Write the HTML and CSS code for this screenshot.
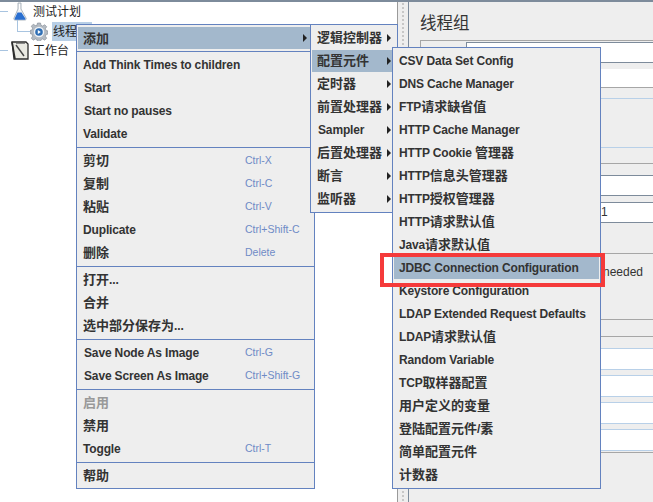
FILE: index.html
```html
<!DOCTYPE html>
<html lang="zh">
<head>
<meta charset="utf-8">
<title>JMeter</title>
<link rel="stylesheet" href="styles.css">
</head>
<body>
<div class="topbar"></div>
<div class="app">
  <div class="tree">
    <div class="stub stub-a"></div>
    <div class="stub stub-b"></div>
    <div class="elbow"></div>
    <div class="node node-plan">
      <svg class="ic-flask" viewBox="0 0 14 19"><path d="M5 1h3v6l5 9c.5 1.200 0 2-1.200 2H2.200C1 18 .5 17.200 1 16l4-9z" fill="#eef1f4" stroke="#9aa4ae" stroke-width=".8"/><path d="M4.500 10.500h4l3.800 6c.3.800 0 1.300-.9 1.300H2.600c-.9 0-1.200-.5-.9-1.300z" fill="#2a6fd0"/><path d="M6.500 2v6" stroke="#fff" stroke-width="1"/></svg>
      <span class="tree-label">测试计划</span>
    </div>
    <div class="node node-group">
      <svg class="ic-gear" viewBox="0 0 18 19"><path d="M7.500 1h3l.5 2.300 1.700.7 2-1.300 2 2-1.300 2 .7 1.800 2 .5v3l-2 .5-.7 1.700 1.300 2-2 2-2-1.300-1.700.7-.5 2h-3l-.5-2-1.700-.7-2 1.300-2-2 1.300-2L1.900 12 0 11.500v-3l1.900-.5.700-1.800-1.300-2 2-2 2 1.300L7 3.300z" fill="#b4bbc3" stroke="#7f8892" stroke-width=".6"/><circle cx="9" cy="10" r="5.200" fill="#eef1f4"/><circle cx="9" cy="10" r="3.800" fill="#2f6fb5"/><path d="M7.800 8l3 2-3 2z" fill="#fff"/></svg>
      <span class="tree-label selected">线程</span>
    </div>
    <div class="node node-bench">
      <svg class="ic-bench" viewBox="0 0 18 19"><path d="M1 1h14l2 2v15H3z" fill="#e9e9e2" stroke="#2c2c2c" stroke-width="1.300"/><path d="M1 1l3 17" stroke="#2c2c2c" stroke-width="1.600"/><path d="M5 4l8 11" stroke="#444" stroke-width="1.400"/><path d="M5 2.500h9" stroke="#888" stroke-width="1"/></svg>
      <span class="tree-label">工作台</span>
    </div>
  </div>
  <div class="splitter"><div class="grip"></div></div>
  <div class="panel">
    <div class="panel-title">线程组</div>
    <div class="box-line"><div class="field f-name"></div></div>
    <div class="field f-comment"></div>
    <div class="rule-blue r-a"></div>
    <div class="rule-blue r-b"></div>
    <div class="rule-grey r-c"></div>
    <div class="field f-dark f-threads"></div>
    <div class="field f-dark f-ramp">1</div>
    <div class="rule-grey r-d"></div>
    <div class="needed">needed</div>
    <div class="rule-grey r-e"></div>
    <div class="rule-grey r-g"></div>
    <div class="field f-blue f-first"></div>
    <div class="field f-blue"></div>
    <div class="field f-blue"></div>
    <div class="field f-blue"></div>
    <div class="rule-grey r-f"></div>
  </div>
</div>

<div class="menu menu-main">
  <div class="item active"><span class="c">添加</span><i class="arrow"></i></div>
  <div class="sep sep-tight"></div>
  <div class="item">Add Think Times to children</div>
  <div class="item nudge">Start</div>
  <div class="item nudge">Start no pauses</div>
  <div class="item">Validate</div>
  <div class="sep"></div>
  <div class="item"><span class="c">剪切</span><kbd>Ctrl-X</kbd></div>
  <div class="item"><span class="c">复制</span><kbd>Ctrl-C</kbd></div>
  <div class="item"><span class="c">粘贴</span><kbd>Ctrl-V</kbd></div>
  <div class="item">Duplicate<kbd>Ctrl+Shift-C</kbd></div>
  <div class="item"><span class="c">删除</span><kbd>Delete</kbd></div>
  <div class="sep"></div>
  <div class="item"><span class="c">打开</span>...</div>
  <div class="item"><span class="c">合并</span></div>
  <div class="item"><span class="c">选中部分保存为</span>...</div>
  <div class="sep"></div>
  <div class="item nudge">Save Node As Image<kbd>Ctrl-G</kbd></div>
  <div class="item nudge">Save Screen As Image<kbd>Ctrl+Shift-G</kbd></div>
  <div class="sep"></div>
  <div class="item disabled"><span class="c">启用</span></div>
  <div class="item"><span class="c">禁用</span></div>
  <div class="item">Toggle<kbd>Ctrl-T</kbd></div>
  <div class="sep"></div>
  <div class="item"><span class="c">帮助</span></div>
</div>

<div class="menu menu-add">
  <div class="item"><span class="c">逻辑控制器</span><i class="arrow"></i></div>
  <div class="item active"><span class="c">配置元件</span><i class="arrow"></i></div>
  <div class="item"><span class="c">定时器</span><i class="arrow"></i></div>
  <div class="item"><span class="c">前置处理器</span><i class="arrow"></i></div>
  <div class="item nudge">Sampler<i class="arrow"></i></div>
  <div class="item"><span class="c">后置处理器</span><i class="arrow"></i></div>
  <div class="item"><span class="c">断言</span><i class="arrow"></i></div>
  <div class="item"><span class="c">监听器</span><i class="arrow"></i></div>
</div>

<div class="menu menu-config">
  <div class="item">CSV Data Set Config</div>
  <div class="item">DNS Cache Manager</div>
  <div class="item">FTP<span class="c">请求缺省值</span></div>
  <div class="item">HTTP Cache Manager</div>
  <div class="item">HTTP Cookie <span class="c">管理器</span></div>
  <div class="item">HTTP<span class="c">信息头管理器</span></div>
  <div class="item">HTTP<span class="c">授权管理器</span></div>
  <div class="item">HTTP<span class="c">请求默认值</span></div>
  <div class="item">Java<span class="c">请求默认值</span></div>
  <div class="item active">JDBC Connection Configuration</div>
  <div class="item">Keystore Configuration</div>
  <div class="item">LDAP Extended Request Defaults</div>
  <div class="item">LDAP<span class="c">请求默认值</span></div>
  <div class="item">Random Variable</div>
  <div class="item">TCP<span class="c">取样器配置</span></div>
  <div class="item"><span class="c">用户定义的变量</span></div>
  <div class="item"><span class="c">登陆配置元件</span>/<span class="c">素</span></div>
  <div class="item"><span class="c">简单配置元件</span></div>
  <div class="item"><span class="c">计数器</span></div>
</div>

<div class="callout"></div>
</body>
</html>
```
FILE: styles.css
```css
* { box-sizing: border-box; }
html, body { margin: 0; padding: 0; }
body {
  width: 653px;
  height: 502px;
  overflow: hidden;
  position: relative;
  background: #eeeeee;
  font-family: "Liberation Sans", "Noto Sans CJK SC", sans-serif;
  font-size: 12px;
  color: #333;
}
.topbar { height: 2px; background: #7d8b9b; }
.app { display: flex; height: 500px; }

/* tree */
.tree { width: 397px; background: #fff; position: relative; }
.node { display: flex; align-items: center; height: 19px; }
.node-plan { padding-left: 13px; height: 19px; }
.node-group { padding-left: 30px; height: 20px; }
.node-bench { padding-left: 11px; height: 19px; }
.ic-flask { width: 14px; height: 19px; flex: none; margin-right: 6px; }
.ic-gear { width: 18px; height: 19px; flex: none; margin-right: 4px; }
.ic-bench { width: 18px; height: 19px; flex: none; margin-right: 4px; }
.tree-label {
  font-family: "Noto Sans CJK SC", sans-serif;
  font-size: 12px;
  line-height: 17px;
  height: 19px;
  color: #222;
}
.selected { background: #b8cfe6; width: 40px; padding-left: 1px; overflow: hidden; white-space: nowrap; }
.stub { position: absolute; left: 0; width: 8px; height: 1px; background: #a8c4e0; }
.stub-a { top: 9px; }
.stub-b { top: 48px; }
.elbow {
  position: absolute; left: 17px; top: 18px; width: 13px; height: 12px;
  border-left: 1px solid #a8c4e0; border-bottom: 1px solid #a8c4e0;
}

/* splitter */
.splitter {
  width: 12px;
  background: #eee;
  border-left: 1px solid #9a9a9a;
  border-right: 1px solid #7d8b9b;
  display: flex;
  justify-content: center;
}
.grip {
  width: 4px;
  background-image: radial-gradient(#999 0.6px, transparent 0.8px);
  background-size: 4px 4px;
}

/* right panel */
.panel { flex: 1; min-width: 0; background: #eee; }
.panel-title {
  height: 38px;
  padding: 9px 0 0 11px;
  font-family: "Noto Sans CJK SC", sans-serif;
  font-size: 16.5px;
  line-height: 22px;
  color: #333;
}
.box-line { margin-left: 11px; border-top: 1px solid #a6a6a6; border-left: 1px solid #a6a6a6; padding-top: 1px; }
.field { background: #fff; height: 20px; }
.f-name { margin-left: 45px; height: 21px; border-top: 1px solid #7d8b9b; border-bottom: 1px solid #7d8b9b; border-left: 1px solid #7d8b9b; }
.f-comment { margin: 6px 0 0 57px; height: 19px; border-bottom: 1px solid #a6a6a6; }
.rule-blue { height: 1px; background: #b8d0e8; }
.rule-grey { height: 1px; background: #a6a6a6; margin-left: 11px; }
.r-a { margin-top: 10px; }
.r-b { margin-top: 48px; }
.r-c { margin-top: 15px; }
.f-dark { border-top: 1px solid #7d8b9b; border-bottom: 1px solid #7d8b9b; height: 21px; padding-left: 192px; line-height: 19px; }
.f-threads { margin-top: 11px; }
.f-ramp { margin-top: 6px; }
.r-d { margin-top: 30px; }
.needed { height: 65px; padding-top: 11px; text-align: right; white-space: nowrap; padding-right: 10px; line-height: 14px; overflow: hidden; }
.r-g { margin-top: 16px; }
.f-blue { margin-top: 5px; height: 22px; border-bottom: 1px solid #b8d0e8; border-top: 1px solid #b8d0e8; }
.f-first { margin-top: 11px; }
.f-blue + .r-f { margin-top: 1px; }

/* menus */
.menu {
  position: absolute;
  background: #eeeeee;
  border: 1px solid #6382bf;
  padding: 2px 1px 1px;
  font-size: 12px;
  letter-spacing: -0.15px;
  font-weight: 700;
  color: #333;
}
.menu-main { left: 76px; top: 24px; width: 239px; height: 465px; }
.menu-add { left: 310px; top: 24px; width: 88px; height: 189px; }
.menu-config { left: 392px; top: 47px; width: 209px; height: 442px; }
.item {
  height: 23px;
  line-height: 23px;
  padding-left: 5px;
  white-space: nowrap;
  position: relative;
}
.menu-main .item { line-height: 24px; }
.nudge { padding-left: 6px; }
.active { background: #a3b8cc; height: 22px; margin-bottom: 1px; }
.disabled, .disabled .c { color: #999; }
.c { font-family: "Noto Sans CJK SC", sans-serif; font-size: 13px; line-height: 1; letter-spacing: 0; }
kbd {
  position: absolute;
  left: 167px;
  top: 0;
  line-height: 23px;
  font-family: "Liberation Sans", sans-serif;
  font-size: 10.5px;
  font-weight: 400;
  letter-spacing: 0;
  color: #6f8bc6;
}
.arrow {
  position: absolute;
  right: 5px;
  top: 7px;
  width: 0;
  height: 0;
  border-style: solid;
  border-width: 4px 0 4px 4px;
  border-color: transparent transparent transparent #222;
}
.menu-main .arrow { right: 6px; }
.sep { height: 4px; padding-top: 2px; }
.sep::before { content: ""; display: block; height: 1px; background: #6382bf; margin: 0 -1px; }
.sep-tight { height: 3px; padding-top: 1px; }

/* annotation */
.callout {
  position: absolute;
  left: 380px;
  top: 253px;
  width: 225px;
  height: 34px;
  border: 4px solid #f53a3a;
}
```
